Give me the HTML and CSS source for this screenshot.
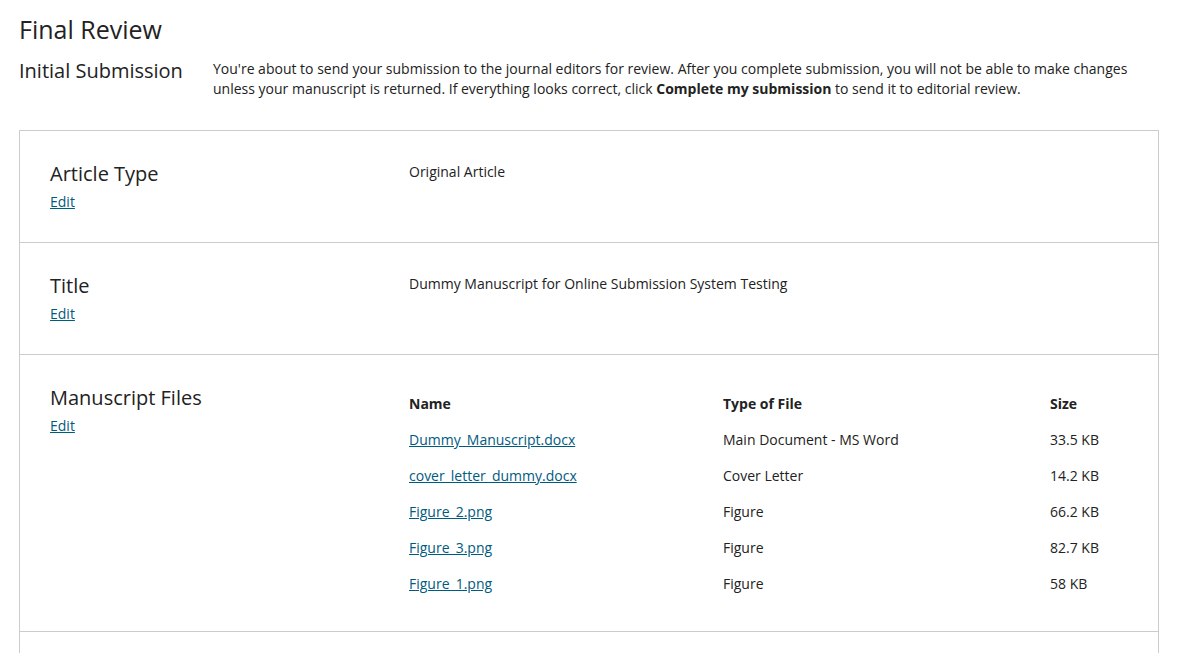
FILE: index.html
```html
<!DOCTYPE html>
<html lang="en">
<head>
<meta charset="utf-8">
<title>Final Review</title>
<link rel="stylesheet" href="styles.css">
</head>
<body>
<div class="page">
  <h1 class="page-title">Final Review</h1>
  <div class="intro">
    <h2 class="intro-title">Initial Submission</h2>
    <p class="intro-text">You're about to send your submission to the journal editors for review. After you complete submission, you will not be able to make changes unless your manuscript is returned. If everything looks correct, click <strong>Complete my submission</strong> to send it to editorial review.</p>
  </div>
  <div class="review-box">
    <section class="review-row">
      <div class="row-label">
        <h3 class="row-title">Article Type</h3>
        <a class="edit-link" href="#">Edit</a>
      </div>
      <div class="row-value">Original Article</div>
    </section>
    <section class="review-row">
      <div class="row-label">
        <h3 class="row-title">Title</h3>
        <a class="edit-link" href="#">Edit</a>
      </div>
      <div class="row-value">Dummy Manuscript for Online Submission System Testing</div>
    </section>
    <section class="review-row review-row-files">
      <div class="row-label">
        <h3 class="row-title">Manuscript Files</h3>
        <a class="edit-link" href="#">Edit</a>
      </div>
      <div class="row-value">
        <div class="files">
          <div class="files-row files-head">
            <div>Name</div><div>Type of File</div><div>Size</div>
          </div>
          <div class="files-row">
            <div><a class="file-link" href="#">Dummy_Manuscript.docx</a></div><div>Main Document - MS Word</div><div>33.5 KB</div>
          </div>
          <div class="files-row">
            <div><a class="file-link" href="#">cover_letter_dummy.docx</a></div><div>Cover Letter</div><div>14.2 KB</div>
          </div>
          <div class="files-row">
            <div><a class="file-link" href="#">Figure_2.png</a></div><div>Figure</div><div>66.2 KB</div>
          </div>
          <div class="files-row">
            <div><a class="file-link" href="#">Figure_3.png</a></div><div>Figure</div><div>82.7 KB</div>
          </div>
          <div class="files-row">
            <div><a class="file-link" href="#">Figure_1.png</a></div><div>Figure</div><div>58 KB</div>
          </div>
        </div>
      </div>
    </section>
    <section class="review-row">
      <div class="row-label">
        <h3 class="row-title">Authors</h3>
        <a class="edit-link" href="#">Edit</a>
      </div>
      <div class="row-value"></div>
    </section>
  </div>
</div>
</body>
</html>
```

FILE: styles.css
```css
html, body {
  margin: 0;
  padding: 0;
  background: #fff;
}
body {
  font-family: "Open Sans", "Noto Sans", sans-serif;
  font-size: 14px;
  line-height: 20px;
  color: #222;
}
.page {
  padding: 11px 19px 40px 19px;
}
.page-title {
  margin: 0;
  font-size: 25px;
  line-height: 36px;
  font-weight: 400;
  color: #222;
}
.intro {
  display: flex;
  align-items: flex-start;
  margin-top: 11px;
}
.intro-title {
  flex: 0 0 194px;
  margin: 0;
  font-size: 20px;
  line-height: 26px;
  font-weight: 400;
}
.intro-text {
  margin: 0;
  padding-top: 1px;
  flex: 1;
}
.intro-text strong {
  font-weight: 700;
}
.review-box {
  margin-top: 31px;
  border: 1px solid #ccc;
}
.review-row {
  display: grid;
  grid-template-columns: 359px 1fr;
  padding: 30px 29px 30px 30px;
  border-top: 1px solid #ccc;
}
.review-row:first-child {
  border-top: none;
}
.review-row-files {
  padding-bottom: 29px;
}
.row-label {
  display: flex;
  flex-direction: column;
  align-items: flex-start;
}
.row-title {
  margin: 0;
  font-size: 20px;
  line-height: 26px;
  font-weight: 400;
}
.edit-link {
  margin-top: 5px;
  color: #005b80;
  text-decoration: underline;
}
.row-value {
  padding-top: 1px;
}
.files {
  display: flex;
  flex-direction: column;
}
.files-row {
  display: grid;
  grid-template-columns: 314px 327px 1fr;
  height: 36px;
  align-items: center;
}
.files-head {
  font-weight: 700;
}
.file-link {
  color: #005b80;
  text-decoration: underline;
}
```
